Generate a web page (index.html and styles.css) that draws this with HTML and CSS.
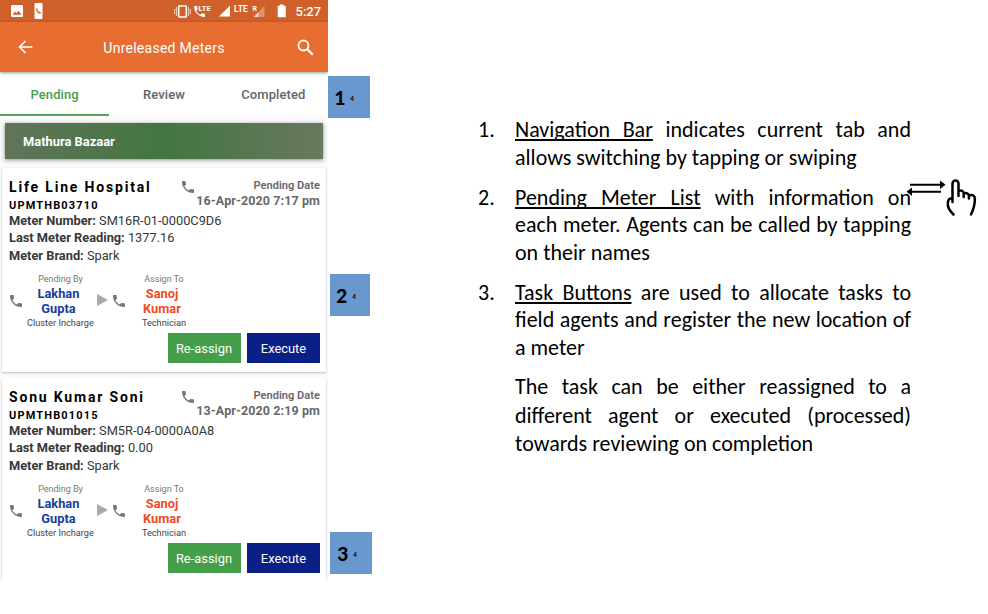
FILE: index.html
```
<!DOCTYPE html>
<html lang="en">
<head>
<meta charset="utf-8">
<title>Unreleased Meters</title>
<link rel="stylesheet" href="styles.css">
</head>
<body>
<svg class="defs" width="0" height="0">
  <symbol id="phone" viewBox="3 3 18 18"><path d="M6.62 10.79c1.44 2.83 3.76 5.14 6.59 6.59l2.2-2.2c.27-.27.67-.36 1.02-.24 1.12.37 2.33.57 3.57.57.55 0 1 .45 1 1V20c0 .55-.45 1-1 1-9.39 0-17-7.61-17-17 0-.55.45-1 1-1h3.5c.55 0 1 .45 1 1 0 1.25.2 2.45.57 3.57.11.35.03.74-.25 1.02l-2.2 2.2z"/></symbol>
</svg>
<main class="page">
  <section class="phone">
    <div class="status">
      <svg width="328" height="22" viewBox="0 0 328 22" fill="#fff">
        <path fill-rule="evenodd" d="M12 5h10a1 1 0 0 1 1 1v10a1 1 0 0 1-1 1H12a1 1 0 0 1-1-1V6a1 1 0 0 1 1-1zM12.500 14.700h9l-3-4-2 2.500-1.500-1.700z"/>
        <path fill-rule="evenodd" d="M35.500 3h6a1 1 0 0 1 1 1v14a1 1 0 0 1-1 1h-6a1 1 0 0 1-1-1V4a1 1 0 0 1 1-1zM36.200 8.500c-.3 3 1.500 5.200 4.500 5l.1-1.500-1.500-.6-.8.700-1.100-1.500.5-.7-.4-1.400z"/>
        <rect x="178.700" y="6" width="7.600" height="11" rx=".6" fill="none" stroke="#fff" stroke-width="1.500"/>
        <path d="M176.500 7v9M188.500 7v9M174.600 9v5M190.400 9v5" stroke="#f3c3aa" stroke-width="1.200"/>
        <svg x="194" y="6" width="11" height="11"><use href="#phone"/></svg>
        <text x="198.500" y="10.500" class="tiny">LTE</text>
        <path d="M230 5.500v11h-11z"/>
        <text x="234" y="11.500" class="lte">LTE</text>
        <text x="252.500" y="11" class="roam">R</text>
        <path d="M264.500 6v11h-11z" opacity=".32"/><path d="M253.500 17l5-5v5z" opacity=".6"/>
        <path d="M279.800 4.500h3.600v1.300h2.300v11.500h-8V5.800h2.100z"/>
        <text x="295.500" y="16" class="clock">5:27</text>
      </svg>
    </div>
    <header class="appbar">
      <svg class="back" width="15" height="14" viewBox="0 0 15 14"><path d="M14.500 7H1.500M7.500 1l-6 6 6 6" fill="none" stroke="#fff" stroke-width="1.700"/></svg>
      <h1 class="title">Unreleased Meters</h1>
      <svg class="search" width="17" height="17" viewBox="0 0 17 17" fill="none" stroke="#fff"><circle cx="6.500" cy="6.500" r="5" stroke-width="1.800"/><path d="M10.300 10.300l5.500 5.500" stroke-width="2.300"/></svg>
    </header>
    <nav class="tabs">
      <span class="tab active">Pending</span><span class="tab">Review</span><span class="tab">Completed</span>
    </nav>
    <div class="group">Mathura Bazaar</div>

    <article class="card">
      <div class="head">
        <div class="ident"><h2 class="name">Life Line Hospital</h2><div class="code">UPMTHB03710</div></div>
        <svg class="call headcall"><use href="#phone"/></svg>
        <div class="due"><div class="due-label">Pending Date</div><div class="due-date">16-Apr-2020 7:17 pm</div></div>
      </div>
      <div class="facts">
        <p><b>Meter Number:</b> SM16R-01-0000C9D6</p>
        <p><b>Last Meter Reading:</b> 1377.16</p>
        <p><b>Meter Brand:</b> Spark</p>
      </div>
      <div class="flow">
        <svg class="call"><use href="#phone"/></svg>
        <div class="agent from"><small>Pending By</small><strong>Lakhan<br>Gupta</strong><em>Cluster Incharge</em></div>
        <i class="arrow"></i>
        <svg class="call"><use href="#phone"/></svg>
        <div class="agent to"><small>Assign To</small><strong>Sanoj<br>Kumar</strong><em>Technician</em></div>
      </div>
      <div class="actions"><button class="btn green">Re-assign</button><button class="btn navy">Execute</button></div>
    </article>

    <article class="card">
      <div class="head">
        <div class="ident"><h2 class="name">Sonu Kumar Soni</h2><div class="code">UPMTHB01015</div></div>
        <svg class="call headcall"><use href="#phone"/></svg>
        <div class="due"><div class="due-label">Pending Date</div><div class="due-date">13-Apr-2020 2:19 pm</div></div>
      </div>
      <div class="facts">
        <p><b>Meter Number:</b> SM5R-04-0000A0A8</p>
        <p><b>Last Meter Reading:</b> 0.00</p>
        <p><b>Meter Brand:</b> Spark</p>
      </div>
      <div class="flow">
        <svg class="call"><use href="#phone"/></svg>
        <div class="agent from"><small>Pending By</small><strong>Lakhan<br>Gupta</strong><em>Cluster Incharge</em></div>
        <i class="arrow"></i>
        <svg class="call"><use href="#phone"/></svg>
        <div class="agent to"><small>Assign To</small><strong>Sanoj<br>Kumar</strong><em>Technician</em></div>
      </div>
      <div class="actions"><button class="btn green">Re-assign</button><button class="btn navy">Execute</button></div>
    </article>
  </section>

  <aside class="markers">
    <div class="marker one">1<sub>4</sub></div>
    <div class="marker two">2<sub>4</sub></div>
    <div class="marker three">3<sub>4</sub></div>
  </aside>

  <section class="notes">
    <div class="note"><span class="num">1.</span><div class="text">
      <p class="full"><u>Navigation Bar</u> indicates current tab and</p>
      <p>allows switching by tapping or swiping</p></div></div>
    <div class="note"><span class="num">2.</span><div class="text">
      <p class="full"><u>Pending Meter List</u> with information on</p>
      <p class="full">each meter. Agents can be called by tapping</p>
      <p>on their names</p></div></div>
    <div class="note"><span class="num">3.</span><div class="text">
      <p class="full"><u>Task Buttons</u> are used to allocate tasks to</p>
      <p class="full">field agents and register the new location of</p>
      <p>a meter</p></div></div>
    <div class="note loose"><span class="num"></span><div class="text">
      <p class="full">The task can be either reassigned to a</p>
      <p class="full">different agent or executed (processed)</p>
      <p>towards reviewing on completion</p></div></div>
    <svg class="swipe" width="72" height="42" viewBox="0 0 72 42" fill="none" stroke="#000">
      <path d="M4 8.700h34M3 15.700h32" stroke-width="2"/>
      <path d="M34 4.500l5.500 4.200-5.500 4.200zM6 11.500l-5.500 4.200 5.500 4.200z" fill="#000" stroke="none"/>
      <path d="M46.500 26V7.500a3 3 0 0 1 6 0V20M52.500 15c3-1 4.800 0 5.200 2v4M57.700 17.500c3-1 4.800 0 5.200 2v3M62.900 19.500c4-1.500 6 .5 6 3.500 0 5-.2 8-3.900 15.500M46.500 22.500H45c-2 0-2.500 1-3 3-1.200 6 2 9.500 5.500 13" stroke-width="2.500" stroke-linecap="round" stroke-linejoin="round"/>
    </svg>
  </section>
</main>
</body>
</html>
```
FILE: styles.css
```
* { box-sizing: border-box; margin: 0; padding: 0; }
body { background: #fff; font-family: Roboto, sans-serif; width: 988px; height: 614px; overflow: hidden; }
.defs { display: block; }
.page { display: flex; height: 614px; }

.phone { width: 328px; height: 580px; overflow: hidden; background: #fafafa; flex: none; }
.status { height: 22px; background: #cf6029; }
.status svg { display: block; }
.tiny { font: 700 7.500px Roboto, sans-serif; letter-spacing: .1px; }
.lte { font: 700 8.500px Roboto, sans-serif; }
.roam { font: 700 7px Roboto, sans-serif; }
.clock { font: 500 13px Roboto, sans-serif; }
.appbar { height: 50px; background: #e76e30; display: flex; align-items: center; padding: 0 14px 0 18px; box-shadow: 0 1px 3px rgba(0,0,0,.4); position: relative; }
.title { flex: 1; text-align: center; color: #fff; font-size: 14px; line-height: 20px; font-weight: 400; letter-spacing: .26px; padding-top: 1px; margin-left: -2px; }
.tabs { height: 44px; background: #fff; display: grid; grid-template: 44px / repeat(3, 1fr); }
.tab { height: 44px; text-align: center; line-height: 46px; font-size: 13px; font-weight: 500; color: #666; letter-spacing: .1px; }
.tab.active { color: #489c52; border-bottom: 2px solid #51a45b; }
.group { margin: 7px 5px 9px; height: 36px; padding-left: 18px; line-height: 37px; color: #fff; font-size: 12.900px; font-weight: 700; background: linear-gradient(90deg, #617459, #427642 50%, #6a785e); box-shadow: 0 1px 4px rgba(0,0,0,.45); }

.card { height: 204px; margin: 0 2px 6px; padding: 10px 6px 0 7px; background: #fff; box-shadow: 0 1px 2px rgba(0,0,0,.25); }
.head { display: flex; height: 34px; }
.ident { width: 173px; color: #000; }
.name { font-size: 14px; line-height: 19px; font-weight: 700; letter-spacing: 1.820px; white-space: nowrap; }
.code { font-size: 11px; line-height: 15px; margin-top: 1px; font-weight: 700; letter-spacing: 1.150px; }
.call { width: 12px; height: 12px; fill: #777; flex: none; }
.headcall { margin-top: 3px; }
.due { flex: 1; text-align: right; color: #686868; font-weight: 700; white-space: nowrap; display: flex; flex-direction: column; align-items: flex-end; padding-top: 1px; }
.due-label { font-size: 11.100px; line-height: 14px; font-weight: 600; }
.due-date { font-size: 12.500px; line-height: 16px; letter-spacing: .1px; }
.facts { color: #383838; font-size: 12.800px; line-height: 17.300px; height: 60px; }
.facts b { font-weight: 700; }
.flow { display: flex; height: 60.500px; }
.flow .call { margin-top: 23px; margin-left: 1px; }
.agent { display: flex; flex-direction: column; align-items: center; white-space: nowrap; }
.agent small { font-size: 9px; line-height: 14px; color: #777; margin-left: 4px; }
.agent strong { font-size: 12.800px; line-height: 15px; text-align: center; }
.agent em { font-style: normal; font-size: 9.200px; line-height: 13px; color: #444; margin-left: 4px; }
.from { width: 73px; }
.from strong { color: #143f9c; }
.to { width: 74px; }
.to strong { color: #ef4b23; }
.arrow { width: 0; height: 0; margin: 22px 5px 0 2px; border-left: 11px solid #a3aea6; border-top: 6px solid transparent; border-bottom: 6px solid transparent; }
.flow .arrow + .call { margin-left: 0; }
.actions { display: flex; justify-content: flex-end; gap: 6.500px; }
.btn { border: 0; width: 73px; height: 30.500px; font: 400 12.900px Roboto, sans-serif; color: #fff; padding-top: 1px; }
.green { background: #459e4a; }
.navy { background: #0a2087; }

.markers { width: 44px; flex: none; padding-top: 76px; }
.marker { height: 42px; background: #6998cf; display: flex; align-items: center; font: 700 22px Carlito, Lato, sans-serif; color: #000; padding-left: 6px; }
.marker sub { font: 700 7px Carlito, Lato, sans-serif; margin: 2px 0 0 5px; }
.one { width: 42px; }
.two { width: 40px; margin: 156px 0 216px 2px; }
.three { width: 42px; margin-left: 2px; padding-left: 7px; }

.notes { position: relative; width: 434px; margin-left: 106px; padding-top: 116px; font-family: Carlito, Lato, sans-serif; font-size: 22px; line-height: 27.500px; color: #000; }
.note { display: flex; margin-bottom: 12.500px; }
.note:nth-child(3) { line-height: 27.800px; margin-bottom: 11.500px; }
.loose { line-height: 28.500px; }
.num { width: 37px; flex: none; }
.text { width: 396px; }
.text p { white-space: nowrap; }
.text .full { text-align: justify; text-align-last: justify; white-space: normal; }
u { text-decoration-thickness: 1.500px; text-underline-offset: 2px; text-decoration-skip-ink: none; }
.swipe { position: absolute; left: 428px; top: 176px; }
```
